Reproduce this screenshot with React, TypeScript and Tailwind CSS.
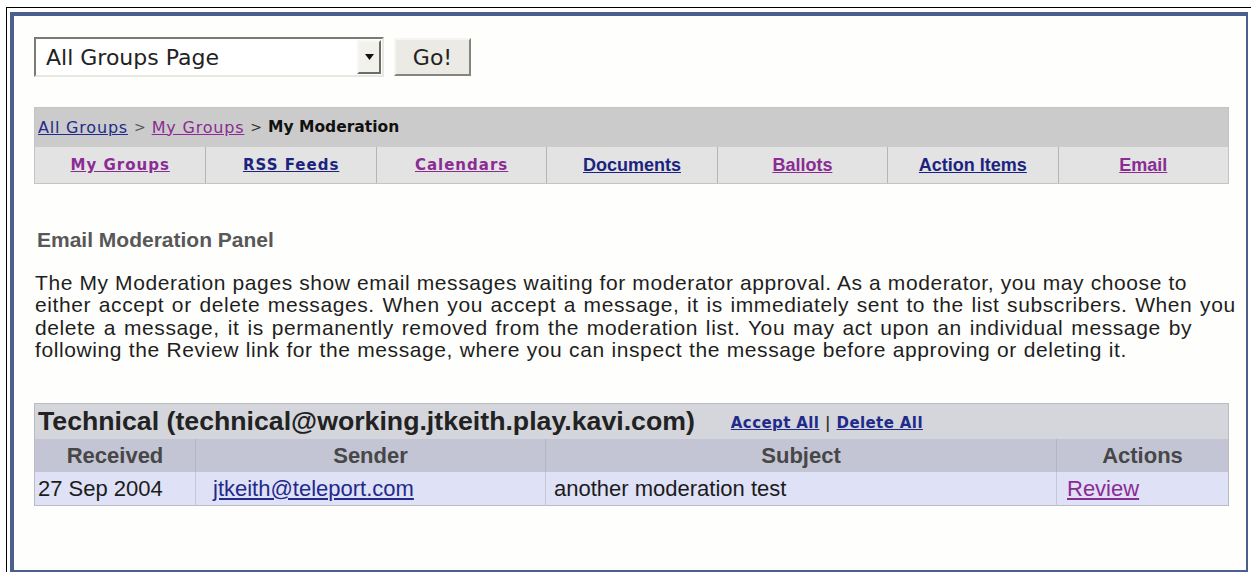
import React from "react";

const navLinks: { label: string; visited: boolean; wide: boolean }[] = [
  { label: "My Groups", visited: true, wide: true },
  { label: "RSS Feeds", visited: false, wide: true },
  { label: "Calendars", visited: true, wide: true },
  { label: "Documents", visited: false, wide: false },
  { label: "Ballots", visited: true, wide: false },
  { label: "Action Items", visited: false, wide: false },
  { label: "Email", visited: true, wide: false },
];

function GroupSelect() {
  return (
    <div className="flex items-center gap-[10px]">
      <div className="flex h-[40px] w-[350px] items-stretch border-[2px] border-t-[#7b7b72] border-l-[#7b7b72] border-r-[#e8e8e2] border-b-[#e8e8e2] bg-white">
        <div className="flex flex-1 items-center pl-[10px] font-['DejaVu_Sans',sans-serif] text-[22px] text-[#222]">
          All Groups Page
        </div>
        <div className="my-[1px] mr-[1px] flex w-[24px] items-center justify-center border-[2px] border-t-[#f7f7f3] border-l-[#f7f7f3] border-r-[#6c6c66] border-b-[#6c6c66] bg-[#f2f1ec]">
          <svg width="9" height="6" viewBox="0 0 9 6">
            <path d="M0 0 H9 L4.5 6 Z" fill="#111" />
          </svg>
        </div>
      </div>
      <button className="flex h-[38px] w-[77px] items-center justify-center border-[2px] border-t-[#f6f5f2] border-l-[#f6f5f2] border-r-[#858580] border-b-[#858580] bg-[#eceae5] font-['DejaVu_Sans',sans-serif] text-[22px] text-[#222]">
        Go!
      </button>
    </div>
  );
}

function Breadcrumbs() {
  return (
    <div className="border border-[#c4c4c4]">
      <div className="flex h-[39px] items-center bg-[#cbcbcb] pl-[3px] font-['DejaVu_Sans',sans-serif]">
        <a className="text-[16px] tracking-[0.8px] text-[#1f2a8a] underline">All Groups</a>
        <span className="mx-[6px] text-[14px] text-[#555]">&gt;</span>
        <a className="text-[16px] tracking-[0.8px] text-[#8a2c93] underline">My Groups</a>
        <span className="mx-[6px] text-[14px] text-[#333]">&gt;</span>
        <span className="text-[15.5px] font-bold text-[#111]">My Moderation</span>
      </div>
      <div className="grid h-[36px] grid-cols-7 bg-[#e3e3e3]">
        {navLinks.map((l, i) => (
          <div
            key={l.label}
            className={`flex items-center justify-center ${i > 0 ? "border-l border-[#b4b4b4]" : ""}`}
          >
            <a
              className={`${l.visited ? "text-[#8a2c93]" : "text-[#1c237f]"} font-bold underline ${
                l.wide
                  ? "font-['DejaVu_Sans',sans-serif] text-[15px] tracking-[1px]"
                  : "font-['Liberation_Sans',Arial,sans-serif] text-[18px]"
              }`}
            >
              {l.label}
            </a>
          </div>
        ))}
      </div>
    </div>
  );
}

function ModerationTable() {
  return (
    <table className="w-full border-collapse border border-[#b9bac2] font-['Liberation_Sans',Arial,sans-serif]">
      <thead>
        <tr className="bg-[#d4d6dc]">
          <th colSpan={4} className="p-0 text-left">
            <div className="flex h-[35px] items-center pl-[3px]">
              <span className="text-[26.7px] font-bold leading-none text-[#222]">
                Technical (technical@working.jtkeith.play.kavi.com)
              </span>
              <span className="ml-[36px] mt-[4px] font-['DejaVu_Sans',sans-serif] text-[15px] font-bold leading-none tracking-[0.4px]">
                <a className="text-[#1f2a8a] underline">Accept All</a>
                <span className="text-[#333]"> | </span>
                <a className="text-[#1f2a8a] underline">Delete All</a>
              </span>
            </div>
          </th>
        </tr>
        <tr className="bg-[#c3c5d5] text-[22px] font-bold leading-[33px] text-[#474747]">
          <th className="h-[33px] w-[161px] border-r border-[#b3b5c3] p-0 font-bold">Received</th>
          <th className="w-[350px] border-r border-[#b3b5c3] p-0 font-bold">Sender</th>
          <th className="border-r border-[#b3b5c3] p-0 font-bold">Subject</th>
          <th className="w-[172px] p-0 font-bold">Actions</th>
        </tr>
      </thead>
      <tbody>
        <tr className="bg-[#dfe1f6] text-[22px] leading-[33px] text-[#1c1c1c]">
          <td className="h-[34px] border-r border-[#c6c8d8] px-[3px] py-0">27 Sep 2004</td>
          <td className="border-r border-[#c6c8d8] px-[17px] py-0">
            <a className="text-[#1f2a8a] underline">jtkeith@teleport.com</a>
          </td>
          <td className="border-r border-[#c6c8d8] px-[8px] py-0">another moderation test</td>
          <td className="px-[10px] py-0">
            <a className="text-[#8a2c93] underline">Review</a>
          </td>
        </tr>
      </tbody>
    </table>
  );
}

export default function App() {
  return (
    <div className="h-[572px] w-[1251px] overflow-hidden bg-white pl-[6px] pt-[7px]">
      <div className="h-[600px] border-l border-t border-black pl-[3px] pt-[4px]">
        <div className="h-[562px] w-[1238px] border-b-[4px] border-l-[4px] border-r-[2px] border-t-[4px] border-[#4b5f8e] bg-[#fefefc] pl-[20px] pr-[17px] pt-[21px]">
          <GroupSelect />
          <div className="mt-[30px]">
            <Breadcrumbs />
          </div>
          <h2 className="mt-[40px] pl-[3px] font-['Liberation_Sans',Arial,sans-serif] text-[21px] font-bold text-[#585858]">
            Email Moderation Panel
          </h2>
          <p className="mr-[-20px] mt-[16px] whitespace-nowrap pl-[1px] font-['Liberation_Sans',Arial,sans-serif] text-[21px] leading-[22.5px] tracking-[0.6px] text-[#1e1e1e]">
            The My Moderation pages show email messages waiting for moderator approval. As a moderator, you may choose to
            <br />
            <span className="[word-spacing:1.2px]">
              either accept or delete messages. When you accept a message, it is immediately sent to the list subscribers. When you
            </span>
            <br />
            <span className="[word-spacing:1.5px]">
              delete a message, it is permanently removed from the moderation list. You may act upon an individual message by
            </span>
            <br />
            <span className="[word-spacing:0.3px]">
              following the Review link for the message, where you can inspect the message before approving or deleting it.
            </span>
          </p>
          <div className="mt-[41px]">
            <ModerationTable />
          </div>
        </div>
      </div>
    </div>
  );
}
